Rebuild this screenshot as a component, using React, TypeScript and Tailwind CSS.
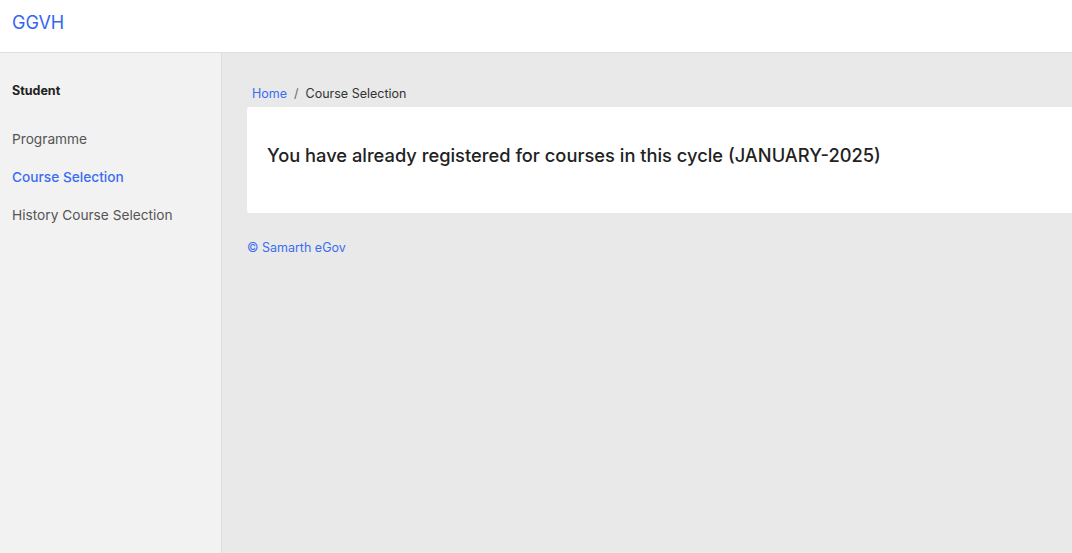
export default function App() {
  return (
    <div className="w-[1072px] h-[553px] overflow-hidden flex flex-col bg-white" style={{ fontFamily: 'Inter, "Liberation Sans", sans-serif' }}>
      <header className="h-[53px] shrink-0 border-b border-[#dedede] flex items-center px-3">
        <span className="text-[18px] text-[#3366f0] -mt-[8px]">GGVH</span>
      </header>
      <div className="flex flex-1 min-h-0">
        <aside className="w-[222px] shrink-0 bg-[#f2f2f2] border-r border-[#dcdcdc] pt-[30px] px-3">
          <div className="text-[12.5px] font-bold text-[#222] leading-[16px]">Student</div>
          <nav className="mt-[30px] flex flex-col gap-[18px] text-[13.7px] leading-[20px]">
            <span className="text-[#555]">Programme</span>
            <span className="text-[#3a6df0] font-medium">Course Selection</span>
            <span className="text-[#555]">History Course Selection</span>
          </nav>
        </aside>
        <main className="flex-1 min-w-0 bg-[#e9e9e9] overflow-hidden pt-[33px] pl-[25px]">
          <div className="flex items-center text-[12.5px] leading-[16px] pl-[5px]">
            <span className="text-[#3a6df0]">Home</span>
            <span className="text-[#666] mx-[7px]">/</span>
            <span className="text-[#333]">Course Selection</span>
          </div>
          <div className="mt-[5px] w-[860px] h-[106px] bg-white rounded-[3px] px-[20px] pt-[36px]">
            <h2 className="text-[18.3px] leading-[24px] text-[#222] font-medium">You have already registered for courses in this cycle (JANUARY-2025)</h2>
          </div>
          <div className="mt-[27px] text-[12.5px] leading-[16px] text-[#3a6df0]">© Samarth eGov</div>
        </main>
      </div>
    </div>
  );
}
